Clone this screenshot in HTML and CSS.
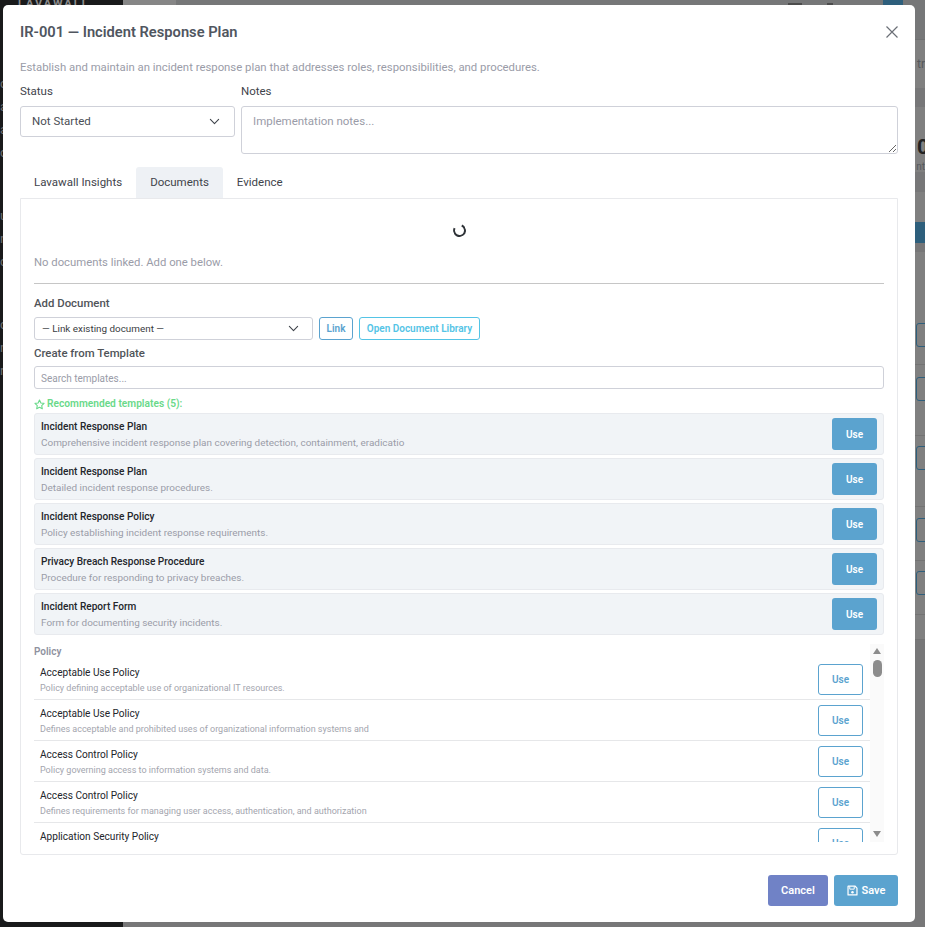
FILE: index.html
```html
<!DOCTYPE html>
<html>
<head>
    <title>IR-001 Incident Response Plan</title>
    <link rel="stylesheet" href="styles.css">
</head>
<body>
    <!-- Page behind the dialog -->
    <div class="backdrop">
        <div class="side">
            <div class="side-logo">LAVAWALL</div>
            <div class="side-list">
                <div>c</div><div>a</div><div>a</div><div>c</div>
            </div>
            <div class="side-list side-lower">
                <div>u</div><div>n</div><div>c</div>
            </div>
            <div class="side-list side-lower">
                <div>c</div><div>n</div><div>r</div>
            </div>
        </div>
        <div class="main">
            <div class="band band-top">
                <span class="top-brand"></span>
                <span class="top-mark"></span>
                <span class="top-mark top-mark-sm"></span>
                <span class="top-dot"></span>
            </div>
            <div class="band band-h48"><span class="band-text">tr</span></div>
            <div class="band band-shade band-h19"></div>
            <div class="band band-h65 band-stat"><span class="stat-num">0</span><span class="band-text">nt</span></div>
            <div class="band band-shade band-h20"></div>
            <div class="band band-h30"></div>
            <div class="band band-blue"></div>
            <div class="band band-shade band-h9"></div>
            <div class="band band-row band-r1"><span class="ghost-btn"></span></div>
            <div class="band band-row band-r2"><span class="ghost-btn"></span></div>
            <div class="band band-row band-r3"><span class="ghost-btn"></span></div>
            <div class="band band-row band-r4"><span class="ghost-btn"></span></div>
            <div class="band band-row band-r5"><span class="ghost-btn"></span></div>
            <div class="band band-row band-r6"></div>
            <div class="band band-shade band-fill"></div>
        </div>
    </div>

    <div class="modal">
        <div class="modal-head">
            <h1>IR-001 — Incident Response Plan</h1>
            <svg class="close-icon" width="14" height="14" viewBox="0 0 14 14"><path d="M1.5 1.5l11 11M12.5 1.5l-11 11" stroke="#6b6f76" stroke-width="1.2" fill="none"/></svg>
        </div>
        <p class="modal-desc">Establish and maintain an incident response plan that addresses roles, responsibilities, and procedures.</p>

        <div class="fields">
            <div class="field-status">
                <label>Status</label>
                <div class="select">
                    <span>Not Started</span>
                    <svg width="11" height="11" viewBox="0 0 16 16"><path d="M2 5l6 6 6-6" stroke="#3f444b" stroke-width="1.6" fill="none" stroke-linecap="round" stroke-linejoin="round"/></svg>
                </div>
            </div>
            <div class="field-notes">
                <label>Notes</label>
                <textarea placeholder="Implementation notes..."></textarea>
            </div>
        </div>

        <div class="tabs">
            <div class="tab">Lavawall Insights</div>
            <div class="tab active">Documents</div>
            <div class="tab">Evidence</div>
        </div>

        <div class="tab-body">
            <div class="spinner"></div>
            <p class="empty">No documents linked. Add one below.</p>
            <hr>

            <div class="section-label first">Add Document</div>
            <div class="link-row">
                <div class="select select-sm">
                    <span>— Link existing document —</span>
                    <svg width="11" height="11" viewBox="0 0 16 16"><path d="M2 5l6 6 6-6" stroke="#3f444b" stroke-width="1.6" fill="none" stroke-linecap="round" stroke-linejoin="round"/></svg>
                </div>
                <button class="btn-sm btn-link">Link</button>
                <button class="btn-sm btn-library">Open Document Library</button>
            </div>

            <div class="section-label">Create from Template</div>
            <input class="search" type="text" placeholder="Search templates...">

            <div class="rec-title">
                <svg width="11" height="11" viewBox="0 0 16 16"><path d="M8 1.6l2 4.2 4.6.6-3.4 3.2.9 4.6L8 11.9l-4.1 2.3.9-4.6L1.4 6.4 6 5.8z" stroke="#6ad98a" stroke-width="1.6" fill="none" stroke-linejoin="round"/></svg>
                Recommended templates (5):
            </div>
            <div class="rec-list">
                <div class="rec-item">
                    <div class="tpl-text">
                        <div class="rec-name">Incident Response Plan</div>
                        <div class="rec-desc">Comprehensive incident response plan covering detection, containment, eradicatio</div>
                    </div>
                    <button class="use-solid">Use</button>
                </div>
                <div class="rec-item">
                    <div class="tpl-text">
                        <div class="rec-name">Incident Response Plan</div>
                        <div class="rec-desc">Detailed incident response procedures.</div>
                    </div>
                    <button class="use-solid">Use</button>
                </div>
                <div class="rec-item">
                    <div class="tpl-text">
                        <div class="rec-name">Incident Response Policy</div>
                        <div class="rec-desc">Policy establishing incident response requirements.</div>
                    </div>
                    <button class="use-solid">Use</button>
                </div>
                <div class="rec-item">
                    <div class="tpl-text">
                        <div class="rec-name">Privacy Breach Response Procedure</div>
                        <div class="rec-desc">Procedure for responding to privacy breaches.</div>
                    </div>
                    <button class="use-solid">Use</button>
                </div>
                <div class="rec-item">
                    <div class="tpl-text">
                        <div class="rec-name">Incident Report Form</div>
                        <div class="rec-desc">Form for documenting security incidents.</div>
                    </div>
                    <button class="use-solid">Use</button>
                </div>
            </div>

            <div class="tpl-scroll">
                <div class="tpl-list">
                    <div class="tpl-group">Policy</div>
                    <div class="tpl-row">
                        <div class="tpl-text">
                            <div class="tpl-name">Acceptable Use Policy</div>
                            <div class="tpl-desc">Policy defining acceptable use of organizational IT resources.</div>
                        </div>
                        <button class="use-outline">Use</button>
                    </div>
                    <div class="tpl-row">
                        <div class="tpl-text">
                            <div class="tpl-name">Acceptable Use Policy</div>
                            <div class="tpl-desc">Defines acceptable and prohibited uses of organizational information systems and</div>
                        </div>
                        <button class="use-outline">Use</button>
                    </div>
                    <div class="tpl-row">
                        <div class="tpl-text">
                            <div class="tpl-name">Access Control Policy</div>
                            <div class="tpl-desc">Policy governing access to information systems and data.</div>
                        </div>
                        <button class="use-outline">Use</button>
                    </div>
                    <div class="tpl-row">
                        <div class="tpl-text">
                            <div class="tpl-name">Access Control Policy</div>
                            <div class="tpl-desc">Defines requirements for managing user access, authentication, and authorization</div>
                        </div>
                        <button class="use-outline">Use</button>
                    </div>
                    <div class="tpl-row">
                        <div class="tpl-text">
                            <div class="tpl-name">Application Security Policy</div>
                        </div>
                        <button class="use-outline">Use</button>
                    </div>
                </div>
                <div class="scrollbar">
                    <span class="arrow-up"></span>
                    <span class="thumb"></span>
                    <span class="arrow-down"></span>
                </div>
            </div>
        </div>

        <div class="modal-foot">
            <button class="btn-cancel">Cancel</button>
            <button class="btn-save">
                <svg width="11" height="11" viewBox="0 0 16 16"><path d="M2 1.5h9.5l3 3v10h-13V2z" stroke="#fff" stroke-width="1.8" fill="none" stroke-linejoin="round"/><path d="M4 2v4h6.5V2" stroke="#fff" stroke-width="1.4" fill="none"/><circle cx="8" cy="10.5" r="1.8" fill="#fff"/></svg>
                Save
            </button>
        </div>
    </div>
</body>
</html>
```

FILE: styles.css
```css
:root {
    --primary: #5ba3cf;
    --border: #cfd1d9;
    --muted: #9a9ca8;
    --text: #3f444b;
    --ink: #23262b;
}

* {
    box-sizing: border-box;
}

body {
    margin: 0;
    height: 927px;
    overflow: hidden;
    position: relative;
    font-family: Roboto, "Liberation Sans", sans-serif;
    color: var(--text);
}

button {
    font-family: inherit;
    cursor: pointer;
}

/* Page behind the dialog */
.backdrop {
    display: flex;
    height: 100%;
}

.side {
    width: 123px;
    flex-shrink: 0;
    background: #191a1b;
    color: #6c6e70;
    font-size: 13px;
    overflow: hidden;
}

.side-logo {
    font-size: 11px;
    font-weight: 700;
    letter-spacing: 2px;
    padding-left: 18px;
    height: 72px;
    line-height: 8px;
    color: #8c8c8c;
}

.side-list div {
    height: 23px;
    line-height: 23px;
}

.side-lower {
    margin-top: 40px;
}

.main {
    flex: 1;
    min-width: 0;
    display: flex;
    flex-direction: column;
    background: #808080;
}

.band {
    display: flex;
    justify-content: flex-end;
    align-items: center;
    overflow: hidden;
    flex-shrink: 0;
}

.band-top {
    height: 40px;
    background: #767778;
    align-items: flex-start;
    border-bottom: 1px solid #6f7071;
    padding-right: 22px;
}

.top-brand {
    width: 53px;
    height: 39px;
    margin-right: auto;
    background: #868686;
}

.top-mark {
    width: 14px;
    height: 8px;
    margin: 3px 25px 0 0;
    background: #4c4c4c;
}

.top-mark-sm {
    width: 6px;
    margin-right: 50px;
}

.top-dot {
    width: 20px;
    height: 14px;
    border-radius: 0 0 8px 8px;
    background: #2e5f7c;
}

.band-text {
    font-size: 12px;
    color: #55585c;
    white-space: nowrap;
}

.band-h48 { height: 48px; }
.band-h19 { height: 19px; }
.band-h20 { height: 20px; }
.band-h30 { height: 30px; }
.band-h65 { height: 65px; }
.band-h9 { height: 9px; }

.band-shade {
    background: #777778;
}

.band-stat {
    flex-direction: column;
    align-items: flex-start;
    padding-left: 794px;
}

.stat-num {
    font-size: 21px;
    font-weight: 700;
    color: #222;
    line-height: 28px;
    margin-top: 10px;
}

.band-stat .band-text {
    font-size: 10px;
    align-self: flex-end;
}

.band-blue {
    height: 21px;
    background: #2e5f7c;
}

.band-row {
    border-bottom: 1px solid #737373;
    align-items: flex-start;
    padding-left: 793px;
    justify-content: flex-start;
}

.band-r1 { height: 113px; padding-top: 71px; }
.band-r2 { height: 71px; padding-top: 12px; }
.band-r3 { height: 71px; padding-top: 10px; }
.band-r4 { height: 54px; padding-top: 11px; }
.band-r5 { height: 54px; padding-top: 10px; }
.band-r6 { height: 25px; }

.band-fill {
    flex: 1;
}

.ghost-btn {
    width: 30px;
    height: 24px;
    flex-shrink: 0;
    border: 1px solid #2e5f7c;
    border-radius: 3px;
}

/* Dialog */
.modal {
    position: absolute;
    left: 3px;
    top: 5px;
    width: 912px;
    height: 917px;
    background: #fff;
    border-radius: 5px;
    padding: 17px 17px 16px;
    display: flex;
    flex-direction: column;
}

.modal-head {
    display: flex;
    justify-content: space-between;
    align-items: center;
    height: 20px;
}

.modal-head h1 {
    margin: 0;
    font-size: 14.7px;
    line-height: 20px;
    font-weight: 600;
    color: #50565f;
}

.close-icon {
    margin-right: -1px;
}

.modal-desc {
    margin: 16px 0 0;
    font-size: 11.35px;
    line-height: 18px;
    color: var(--muted);
}

.fields {
    display: flex;
    gap: 6px;
    margin-top: 7px;
}

.field-status {
    width: 215px;
    flex-shrink: 0;
}

.field-notes {
    flex: 1;
}

.fields label {
    display: block;
    font-size: 11.5px;
    line-height: 17px;
    margin-bottom: 6px;
    color: #3f444b;
}

.select {
    display: flex;
    justify-content: space-between;
    align-items: center;
    height: 31px;
    padding: 0 14px 1px 11px;
    border: 1px solid var(--border);
    border-radius: 3px;
    font-size: 11.5px;
    color: #4a4e55;
}

textarea {
    display: block;
    width: 100%;
    height: 48px;
    padding: 7px 11px;
    border: 1px solid var(--border);
    border-radius: 3px;
    font-family: inherit;
    font-size: 11.5px;
    line-height: 15px;
    resize: vertical;
    outline: none;
}

textarea::placeholder,
.search::placeholder {
    color: var(--muted);
    opacity: 1;
}

.tabs {
    display: flex;
    margin-top: 13px;
    height: 31px;
}

.tab {
    padding: 0 14px;
    font-size: 11.5px;
    line-height: 30px;
    color: #3f444b;
    border-radius: 3px 3px 0 0;
}

.tab.active {
    background: #eef1f5;
}

.tab-body {
    height: 657px;
    padding: 0 13px;
    border: 1px solid #e8e9ec;
    border-radius: 0 0 3px 3px;
}

.spinner {
    width: 13px;
    height: 13px;
    margin: 25px auto 0;
    border: 2px solid #2f3338;
    border-top-color: transparent;
    border-radius: 50%;
    transform: rotate(-20deg);
}

.empty {
    margin: 17px 0 0;
    font-size: 11.3px;
    line-height: 18px;
    color: var(--muted);
}

.tab-body hr {
    margin: 11px 0 0;
    border: none;
    border-top: 1px solid #c6c6c6;
}

.section-label {
    font-size: 11.4px;
    line-height: 16px;
    font-weight: 500;
    color: #505459;
    margin-top: 5px;
}

.section-label.first {
    margin-top: 11px;
}

.link-row {
    display: flex;
    gap: 6px;
    margin-top: 6px;
}

.select-sm {
    width: 279px;
    height: 23px;
    padding: 0 13px 0 7px;
    font-size: 9.9px;
    color: #3a3d42;
}

.btn-sm {
    height: 23px;
    padding: 0 6px;
    background: #fff;
    border-radius: 3px;
    font-size: 10px;
    font-weight: 600;
}

.btn-link {
    width: 34px;
    border: 1px solid var(--primary);
    color: var(--primary);
}

.btn-library {
    width: 121px;
    border: 1px solid #54c4e6;
    color: #54c4e6;
}

.search {
    display: block;
    width: 100%;
    height: 23px;
    margin-top: 5px;
    padding: 1px 6px 0;
    border: 1px solid var(--border);
    border-radius: 3px;
    font-family: inherit;
    font-size: 10px;
    outline: none;
}

.rec-title {
    display: flex;
    align-items: center;
    gap: 2px;
    margin-top: 8px;
    font-size: 10.2px;
    line-height: 14px;
    font-weight: 600;
    color: #6ad98a;
}

.rec-list {
    display: flex;
    flex-direction: column;
    gap: 3px;
    margin-top: 2px;
}

.rec-item {
    display: flex;
    justify-content: space-between;
    align-items: center;
    height: 42px;
    padding: 0 6px;
    background: #f1f4f7;
    border: 1px solid #e8eaee;
    border-radius: 3px;
}

.rec-name {
    margin-top: 1px;
    font-size: 10.1px;
    line-height: 14px;
    font-weight: 500;
    color: var(--ink);
}

.rec-desc {
    margin-top: 2px;
    font-size: 9.95px;
    line-height: 14px;
    color: var(--muted);
}

.use-solid {
    width: 45px;
    height: 32px;
    padding: 0;
    border: none;
    border-radius: 3px;
    background: var(--primary);
    color: #fff;
    font-size: 10px;
    font-weight: 600;
}

.tpl-scroll {
    display: flex;
    height: 198px;
    margin-top: 9px;
    overflow: hidden;
}

.tpl-list {
    flex: 1;
    overflow: hidden;
}

.tpl-group {
    height: 15px;
    font-size: 10px;
    line-height: 15px;
    font-weight: 600;
    color: #8f92a0;
}

.tpl-row {
    display: flex;
    justify-content: space-between;
    align-items: flex-start;
    height: 41px;
    padding: 5px 7px 0 6px;
    border-bottom: 1px solid #e6e7e9;
}

.tpl-text {
    min-width: 0;
}

.tpl-name {
    margin-top: 2px;
    font-size: 10.1px;
    line-height: 14px;
    color: var(--ink);
}

.tpl-desc {
    margin-top: 1px;
    font-size: 9px;
    line-height: 14px;
    color: #a3a5ae;
}

.use-outline {
    width: 45px;
    height: 31px;
    flex-shrink: 0;
    padding: 0;
    background: #fff;
    border: 1px solid var(--primary);
    border-radius: 3px;
    color: var(--primary);
    font-size: 10px;
    font-weight: 600;
}

.scrollbar {
    width: 14px;
    flex-shrink: 0;
    background: #fafafa;
    display: flex;
    flex-direction: column;
    align-items: center;
    padding-top: 4px;
}

.arrow-up {
    border-left: 4.5px solid transparent;
    border-right: 4.5px solid transparent;
    border-bottom: 6px solid #8c8c8c;
}

.thumb {
    width: 9px;
    height: 17px;
    margin-top: 6px;
    border-radius: 5px;
    background: #8c8c8c;
}

.arrow-down {
    margin-top: auto;
    margin-bottom: 5px;
    border-left: 4.5px solid transparent;
    border-right: 4.5px solid transparent;
    border-top: 6px solid #8c8c8c;
}

.modal-foot {
    display: flex;
    justify-content: flex-end;
    gap: 6px;
    margin-top: 20px;
}

.modal-foot button {
    height: 31px;
    border: none;
    border-radius: 3px;
    color: #fff;
    font-size: 11px;
    font-weight: 600;
}

.btn-cancel {
    width: 60px;
    background: #7082c6;
}

.btn-save {
    width: 64px;
    background: var(--primary);
    display: flex;
    justify-content: center;
    align-items: center;
    gap: 4px;
}
```
